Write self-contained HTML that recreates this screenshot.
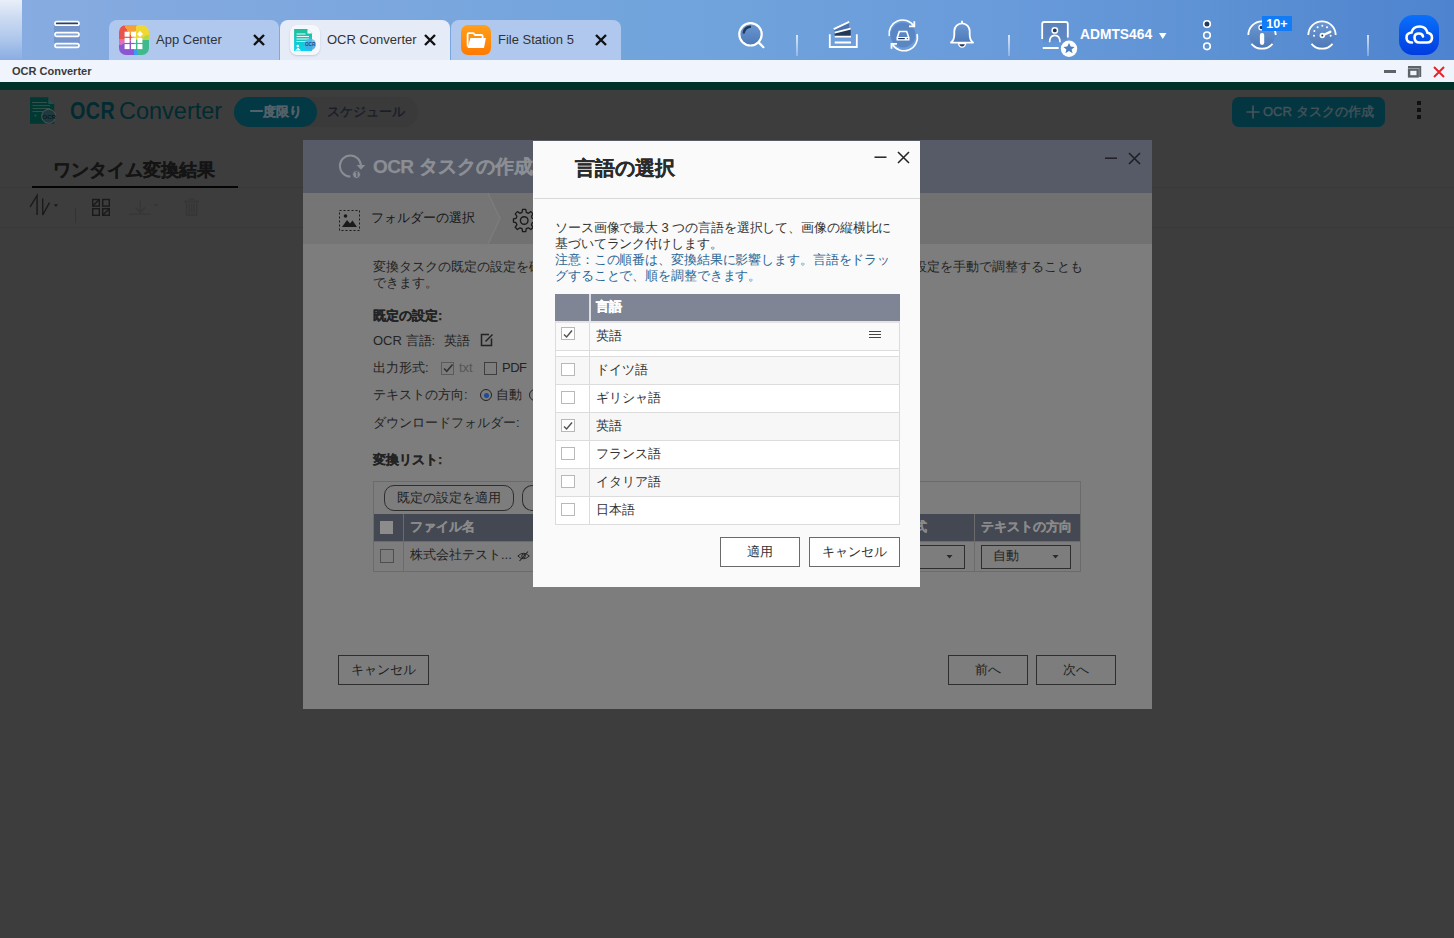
<!DOCTYPE html>
<html><head><meta charset="utf-8">
<style>
*{box-sizing:border-box;margin:0;padding:0}
html,body{width:1454px;height:938px;overflow:hidden;font-family:"Liberation Sans",sans-serif;background:#3d3d3d;color:#222}
.a{position:absolute}
svg{position:absolute;overflow:visible}
#top{left:0;top:0;width:1454px;height:60px;background:linear-gradient(90deg,#87ace2 0%,#84aae0 7%,#72a4dc 44%,#699bdb 69%,#5d92d4 83%,#4e83cf 100%)}
#strip{left:0;top:0;width:22px;height:60px;background:linear-gradient(180deg,#e9effa 0%,#d0ddf2 25%,#b3caed 60%,#8aade2 100%)}
.tab{top:20px;height:40px;width:170px;border-radius:8px 8px 0 0;background:#b0c8ed}
.tab.act{background:#e5ecf8}
.tab .ic{position:absolute;left:10px;top:5px;width:30px;height:30px;border-radius:7px;overflow:hidden}
.tab .tx{position:absolute;left:47px;top:12px;font-size:13px;color:#333;white-space:nowrap;line-height:16px}
.sep{top:35px;width:2px;height:21px;background:linear-gradient(180deg,rgba(255,255,255,.75),rgba(255,255,255,.25))}
#title{left:0;top:60px;width:1454px;height:22px;background:#eff4fd}
#title .t{position:absolute;left:12px;top:5px;font-size:11px;line-height:12px;color:#3a3a3a;font-weight:bold}
#teal{left:0;top:82px;width:1454px;height:8px;background:#01302b}

.app{font-family:"Liberation Sans",sans-serif}
.hl{left:0;width:1454px;height:1px;background:#383838}
#dlg{left:303px;top:140px;width:849px;height:569px;background:#7d7d7d}
#dhead{left:0;top:0;width:849px;height:53px;background:#575b67}
#steps{left:0;top:53px;width:849px;height:51px;background:#717171}
.bt{font-size:13px;color:#232323;line-height:16px;white-space:nowrap}
.btn{border:1px solid #2e2e2e;background:transparent;font-size:13px;color:#222;text-align:center;line-height:28px;white-space:nowrap}
#lang{left:534px;top:141px;width:386px;height:446px;background:#fafafa}
.lrow{left:21px;width:345px;height:28px;border:1px solid #dcdcdc;border-top:none}
.lrow .c{position:absolute;left:5px;top:6px;width:14px;height:13px;border:1px solid #b8b8b8;background:#fff}
.lrow .d{position:absolute;left:33px;top:0;width:1px;height:100%;background:#dcdcdc}
.lrow .t{position:absolute;left:40px;top:5px;font-size:13px;line-height:15px;color:#333;white-space:nowrap}
.lbtn{top:396px;height:30px;border:1px solid #6a6a6a;background:#fff;font-size:13px;color:#333;text-align:center;line-height:28px}
.bd{-webkit-text-stroke:.25px currentColor}
</style></head>
<body>
<div class="a" id="top"></div>
<div class="a" id="strip"></div>
<!-- hamburger -->
<svg style="left:0;top:0" width="1454" height="60">
  <rect x="54" y="25" width="26" height="19" fill="#7092c8" opacity=".85"/>
  <rect x="55" y="21.6" width="24" height="3.6" rx="1.8" fill="#2a4066" stroke="#fff" stroke-width="1.7"/>
  <rect x="55" y="32.7" width="24" height="3.6" rx="1.8" fill="#84a6da" stroke="#fff" stroke-width="1.7"/>
  <rect x="55" y="43.7" width="24" height="3.6" rx="1.8" fill="#84a6da" stroke="#fff" stroke-width="1.7"/>
</svg>
<div class="a tab" style="left:109px">
  <div class="ic" style="background:conic-gradient(from -35deg at 50% 50%,#f5a03a 0deg 45deg,#f0d834 45deg 105deg,#b5d845 105deg 125deg,#3fb98d 125deg 200deg,#3a9cf2 200deg 215deg,#8e55d2 215deg 285deg,#e46bb6 285deg 310deg,#e8534c 310deg 360deg)">
    <svg style="left:0;top:0" width="30" height="30">
      <g fill="#fff"><rect x="5.6" y="6.7" width="5" height="5"/><rect x="12" y="6.7" width="5" height="5"/><path d="M21 5.9L24 8.9L21 11.9L18 8.9Z"/>
      <rect x="5.6" y="12.9" width="5" height="5"/><rect x="12" y="12.9" width="5" height="5"/><rect x="18.4" y="12.9" width="5" height="5"/>
      <rect x="5.6" y="19.1" width="5" height="5"/><rect x="12" y="19.1" width="5" height="5"/><rect x="18.4" y="19.1" width="5" height="5"/></g>
    </svg>
  </div>
  <div class="tx">App Center</div>
  <svg style="left:144px;top:14px" width="12" height="12"><path d="M1 1L11 11M11 1L1 11" stroke="#111" stroke-width="2.4"/></svg>
</div>
<div class="a tab act" style="left:280px">
  <div class="ic" style="background:#f4f7fb;box-shadow:0 1px 2px rgba(0,0,0,.15)">
    <svg style="left:0;top:0" width="30" height="30">
      <defs><linearGradient id="dg" x1="0" y1="0" x2="0" y2="1"><stop offset="0" stop-color="#20bf98"/><stop offset="1" stop-color="#04d4f4"/></linearGradient></defs>
      <path d="M4.1 4H17.5L22 8.5V26H4.1Z" fill="url(#dg)"/>
      <path d="M17.5 4L22 8.5H17.5Z" fill="#fff"/>
      <g stroke="#fff" stroke-width="1.1" opacity=".9"><path d="M6.5 9H15.5M6.5 11.5H19M6.5 14H19M6.5 16.5H17"/></g>
      <circle cx="7.8" cy="21" r="1.3" fill="#fff"/>
      <path d="M5 25.5L8 22.5L11 25.5Z" fill="#fff"/>
      <circle cx="20" cy="19.5" r="6" fill="#5ab8f0" opacity=".8"/>
      <path d="M14.5 19.5A5.5 5.5 0 0 0 25.5 19.5" fill="#3a9ee0" opacity=".5"/>
      <text x="15" y="21.2" font-size="4.6" font-weight="bold" fill="#174a7a" font-family="Liberation Sans">OCR</text>
    </svg>
  </div>
  <div class="tx">OCR Converter</div>
  <svg style="left:144px;top:14px" width="12" height="12"><path d="M1 1L11 11M11 1L1 11" stroke="#111" stroke-width="2.4"/></svg>
</div>
<div class="a tab" style="left:451px">
  <div class="ic" style="background:linear-gradient(180deg,#ff9f1c,#ff7a00)">
    <svg style="left:0;top:0" width="30" height="30">
      <path d="M6.6 21.5V9.2Q6.6 8.1 7.7 8.1H12.5L14 10H20.5Q21.6 10 21.6 11.1V13" fill="none" stroke="#fff" stroke-width="1.8" stroke-linejoin="round"/>
      <path d="M9.4 13.1H24.9L23.1 22.4Q22.9 23.1 22.2 23.1H7.4Q6.4 23.1 6.7 22Z" fill="#fff"/>
    </svg>
  </div>
  <div class="tx">File Station 5</div>
  <svg style="left:144px;top:14px" width="12" height="12"><path d="M1 1L11 11M11 1L1 11" stroke="#111" stroke-width="2.4"/></svg>
</div>

<!-- right icons -->
<svg style="left:0;top:0" width="1454" height="60">
  <defs><linearGradient id="ig" x1="0" y1="0" x2="0" y2="1"><stop offset="0" stop-color="#6b98d3"/><stop offset="1" stop-color="#4d7ab6"/></linearGradient></defs>
  <!-- search -->
  <circle cx="750.5" cy="34.3" r="11.2" fill="url(#ig)" stroke="#fff" stroke-width="2.2"/>
  <path d="M743.8 32.5Q744.8 27.6 750 26.8" stroke="#22385a" stroke-width="2.4" fill="none" stroke-linecap="round"/>
  <path d="M758.6 42.4L763.4 47.2" stroke="#fff" stroke-width="2.2" stroke-linecap="round"/>
  <!-- stack -->
  <path d="M829.8 34.3V47H856.8V34.3" stroke="#fff" stroke-width="1.8" fill="none"/>
  <path d="M833.7 29.1L849.2 21.9V28.6L834.7 32.7Z" fill="#4b72ad"/>
  <path d="M834.7 32.7L850.7 28.6V36.3H834.7Z" fill="#22385a"/>
  <path d="M833.7 29.1L849.2 21.9M834.7 32.7L850.7 28.6M834.7 36.6H851M834.7 42.5H851" stroke="#fff" stroke-width="1.8"/>
  <!-- sync -->
  <circle cx="903" cy="35" r="12.5" fill="#5a87c4"/>
  <path d="M889.3 36A13.5 13.5 0 0 1 913.8 26" stroke="#fff" stroke-width="1.6" fill="none"/>
  <path d="M917 34A13.5 13.5 0 0 1 892.5 44.5" stroke="#fff" stroke-width="1.6" fill="none"/>
  <path d="M914.3 21.3V26.3H909" stroke="#fff" stroke-width="1.8" fill="none"/>
  <path d="M891.5 48.8V43.8H897" stroke="#fff" stroke-width="1.8" fill="none"/>
  <path d="M897.3 37.5L899.3 31.5H906.7L908.7 37.5" fill="none" stroke="#fff" stroke-width="1.6"/>
  <path d="M896.5 37H909.5V40.5H896.5Z" fill="#fff"/>
  <path d="M898.2 38.6H904.8" stroke="#22385a" stroke-width="1.2"/><circle cx="907.3" cy="38.6" r=".6" fill="#22385a"/>
  <!-- bell -->
  <path d="M962 20.8V23" stroke="#fff" stroke-width="1.8"/>
  <path d="M951 42.6Q954.3 40.2 954.3 34.5V31A7.7 7.7 0 0 1 969.7 31V34.5Q969.7 40.2 973 42.6Z" fill="url(#ig)" stroke="#fff" stroke-width="1.8" stroke-linejoin="round"/>
  <path d="M958.6 43.6A3.5 3.5 0 0 0 965.6 43.6Z" fill="#22385a" stroke="#fff" stroke-width="1.4"/>
  <!-- user -->
  <defs><linearGradient id="ug" x1="0" y1="0" x2="0" y2="1"><stop offset="0" stop-color="#5a83be"/><stop offset=".7" stop-color="#5e88c3"/><stop offset="1" stop-color="#6394d6" stop-opacity="0"/></linearGradient></defs><rect x="1043" y="22.5" width="24" height="23" fill="url(#ug)"/>
  <path d="M1042.2 39V24Q1042.2 22 1044.2 22H1065.8Q1067.8 22 1067.8 24V37.5" stroke="#fff" stroke-width="1.8" fill="none"/>
  <path d="M1043.5 48H1058" stroke="#fff" stroke-width="1.8" stroke-linecap="round"/>
  <circle cx="1054.8" cy="30.4" r="2.7" fill="#22385a" stroke="#fff" stroke-width="1.5"/>
  <path d="M1049.6 42.3Q1049.6 35.4 1054.8 35.4Q1060 35.4 1060 42.3" stroke="#fff" stroke-width="1.6" fill="none"/>
  <circle cx="1069" cy="48.7" r="8.2" fill="#fff"/>
  <path d="M1069 43L1070.7 46.6L1074.6 46.9L1071.6 49.4L1072.6 53.2L1069 51.1L1065.4 53.2L1066.4 49.4L1063.4 46.9L1067.3 46.6Z" fill="#5080c4"/>
  <!-- dots -->
  <circle cx="1207" cy="24" r="3.3" fill="#243a5a" stroke="#fff" stroke-width="1.6"/>
  <circle cx="1207" cy="35.3" r="3.3" fill="none" stroke="#fff" stroke-width="1.6"/>
  <circle cx="1207" cy="46.3" r="3.3" fill="none" stroke="#fff" stroke-width="1.6"/>
  <!-- info -->
  <circle cx="1262" cy="35" r="13" fill="url(#ig)"/>
  <path d="M1248.3 35A13.7 13.7 0 0 1 1275.7 35M1272.5 43.8A13.7 13.7 0 0 1 1251.5 43.8" stroke="#fff" stroke-width="1.8" fill="none"/>
  <rect x="1259.9" y="32.9" width="4.3" height="12" rx="2.1" fill="#fff"/>
  <circle cx="1261.3" cy="27.5" r="2.4" fill="#22385a" stroke="#fff" stroke-width="1.3"/>
  <rect x="1262" y="16" width="30" height="15" fill="#127cf6"/>
  <text x="1266.3" y="27.6" font-size="12.5" font-weight="bold" fill="#fff" font-family="Liberation Sans">10+</text>
  <!-- gauge -->
  <circle cx="1322" cy="35" r="13" fill="url(#ig)"/>
  <path d="M1308.3 35A13.7 13.7 0 0 1 1335.7 35M1332.5 43.8A13.7 13.7 0 0 1 1311.5 43.8" stroke="#fff" stroke-width="1.8" fill="none"/>
  <g fill="#fff"><circle cx="1314.4" cy="31.1" r="1"/><circle cx="1317.6" cy="27.2" r="1"/><circle cx="1322.3" cy="25.7" r="1"/><circle cx="1327" cy="27.2" r="1"/><circle cx="1314" cy="35.8" r="1"/><circle cx="1330.6" cy="35.8" r="1"/></g>
  <path d="M1322.3 35.5L1330.3 31.8" stroke="#fff" stroke-width="2.4" stroke-linecap="round"/>
  <circle cx="1322.3" cy="35.5" r="2.7" fill="#fff"/>
  <circle cx="1322.3" cy="35.5" r="1" fill="#22385a"/>
</svg>
<div class="a sep" style="left:796px"></div>
<div class="a sep" style="left:1008px"></div>
<div class="a sep" style="left:1367px"></div>
<div class="a" style="left:1080px;top:28px;font-size:13.8px;font-weight:bold;color:#fff;line-height:14px">ADMTS464</div>
<svg style="left:1159px;top:33px" width="8" height="6"><path d="M0 0H7.5L3.75 6Z" fill="#fff"/></svg>
<div class="a" style="left:1399px;top:15px;width:40px;height:40px;border-radius:14px;background:linear-gradient(180deg,#0a70fc,#003ce0)">
  <svg style="left:0;top:0" width="40" height="40">
    <path d="M13 27.5Q7.5 27.5 7.5 22.5Q7.5 18 12.5 17.5Q14 11.5 20.5 11.5Q27 11.5 28.5 17.8Q33 18.5 33 22.8Q33 27.5 28 27.5H20.5Q15.5 27.5 15.5 22.5Q15.5 18.5 20 18.5Q23.5 18.5 24 21.5" stroke="#fff" stroke-width="2.6" fill="none" stroke-linecap="round"/>
  </svg>
</div>

<div class="a" id="title"><span class="t">OCR Converter</span>
  <div class="a" style="left:1384px;top:10px;width:12px;height:3px;background:#5f6368"></div>
  <svg style="left:1407px;top:5px" width="16" height="14"><path d="M1 2H13.2V12" fill="none" stroke="#5f6368" stroke-width="2"/><rect x="2.1" y="4.6" width="8.6" height="6.8" fill="none" stroke="#5f6368" stroke-width="2.4"/></svg>
  <svg style="left:1433px;top:6px" width="12" height="12"><path d="M1 1L11 11M11 1L1 11" stroke="#e8232a" stroke-width="2"/></svg>
</div>
<div class="a" id="teal"></div>

<!-- app header (dimmed) -->
<svg style="left:29px;top:97px" width="30" height="30">
  <path d="M1 0.3H19.3L25.2 7V26.8H1Z" fill="#023832"/>
  <path d="M19.3 0.3L25.2 7H19.3Z" fill="#2c4a48"/>
  <g stroke="#33504c" stroke-width="1"><path d="M3 5.5H18M3.5 8.6H21M3.5 11.5H21M3.5 14.5H21"/></g>
  <circle cx="6.5" cy="18.5" r="1" fill="#3a4f4c"/>
  <circle cx="19.7" cy="19.3" r="7" fill="#1f3a3e" stroke="#555" stroke-width="1"/>
  <text x="13.6" y="21.5" font-size="6" font-weight="bold" fill="#0b1a22" font-family="Liberation Sans">OCR</text>
</svg>
<div class="a" style="left:70px;top:97px;font-size:23.5px;line-height:28px;color:#022b31;white-space:nowrap"><b style="display:inline-block;transform:scaleX(.84);transform-origin:0 0;letter-spacing:.6px">OCR</b><span style="position:absolute;left:49px;top:0;letter-spacing:0">Converter</span></div>
<div class="a" style="left:234px;top:97px;width:184px;height:30px;border-radius:15px;background:#3a3a3a"></div>
<div class="a" style="left:234px;top:97px;width:83px;height:30px;border-radius:15px;background:#023944;color:#53616a;font-size:13px;font-weight:bold;line-height:30px;text-align:center;-webkit-text-stroke:.3px #53616a">一度限り</div>
<div class="a" style="left:327px;top:97px;font-size:12.5px;line-height:30px;color:#181c28;-webkit-text-stroke:.35px #181c28">スケジュール</div>
<div class="a" style="left:1232px;top:97px;width:153px;height:30px;border-radius:7px;background:#033640;color:#45535a;font-size:13px;line-height:30px;white-space:nowrap"><svg style="left:14px;top:8px" width="14" height="14"><path d="M7 0.5V13.5M0.5 7H13.5" stroke="#45535a" stroke-width="1.7"/></svg><span class="bd" style="position:absolute;left:31px;-webkit-text-stroke:.4px currentColor">OCR タスクの作成</span></div>
<div class="a" style="left:1417px;top:101px;width:4px;height:4px;background:#111"></div>
<div class="a" style="left:1417px;top:108px;width:4px;height:4px;background:#111"></div>
<div class="a" style="left:1417px;top:115px;width:4px;height:4px;background:#111"></div>
<div class="a bd" style="left:53px;top:159.5px;font-size:17.5px;font-weight:bold;color:#141414;line-height:20px;white-space:nowrap">ワンタイム変換結果</div>
<div class="a hl" style="top:187px"></div>
<div class="a" style="left:32px;top:186px;width:206px;height:2px;background:#050505"></div>
<div class="a hl" style="top:227px"></div>
<svg style="left:0;top:190px" width="300" height="40">
  <path d="M30.1 16.8L37.1 5.5V25M42.7 8.5V25L49.5 12.7" stroke="#1a1a1a" stroke-width="1.4" fill="none"/>
  <path d="M53.8 14.2H58L55.9 17Z" fill="#1a1a1a"/>
  <path d="M75.5 17.8V33.3" stroke="#333" stroke-width="1"/>
  <g stroke="#1a1a1a" stroke-width="1.4" fill="none"><rect x="92.7" y="9.5" width="6.6" height="6.6"/><rect x="102.7" y="9.5" width="6.6" height="6.6"/><rect x="92.7" y="18.7" width="6.6" height="6.6"/><rect x="102.7" y="18.7" width="6.6" height="6.6"/><path d="M92.7 16.1L99.3 9.5M102.7 25.3L109.3 18.7"/></g>
  <g stroke="#363636" stroke-width="1.3" fill="none"><path d="M129 24.2H150.6M140.3 10.6V22.5M135.5 17.5L140.3 22.5L145.1 17.5"/></g>
  <path d="M153.5 14H159L156.2 17Z" fill="#363636"/>
  <g stroke="#363636" stroke-width="1.3" fill="none"><path d="M184.2 11.5H199M186.5 11.5V25H196.7V11.5M189.3 13.5V23.5M191.6 13.5V23.5M193.9 13.5V23.5M188.8 9.2H194.4"/></g>
</svg>

<!-- task dialog -->
<div class="a" id="dlg">
  <div class="a" id="dhead">
    <svg style="left:36px;top:14px" width="30" height="26">
      <path d="M11.4 22.5A10.5 10.5 0 1 1 21.9 12" stroke="#8a8d91" stroke-width="2" fill="none"/>
      <path d="M17.6 11.1H26.3L22 15.8Z" fill="#8a8d91"/>
      <circle cx="17.5" cy="20.5" r="4" fill="#8a8d91" stroke="#575b67" stroke-width="1"/>
      <path d="M16.6 18.8L17.9 18V23" stroke="#575b67" stroke-width="1.3" fill="none"/>
    </svg>
    <div class="a bd" style="left:70px;top:16px;font-size:19px;font-weight:bold;color:#8b8e93;line-height:22px;white-space:nowrap"><span style="letter-spacing:-.6px">OCR</span> タスクの作成</div>
    <svg style="left:802px;top:17px" width="13" height="3"><path d="M0 1.2H12" stroke="#1f1f24" stroke-width="1.5"/></svg>
    <svg style="left:825px;top:12px" width="13" height="13"><path d="M1 1L12 12M12 1L1 12" stroke="#1f1f24" stroke-width="1.6"/></svg>
  </div>
  <div class="a" id="steps">
    <svg style="left:0;top:0" width="849" height="51"><path d="M0 0H185L197 25.5L185 51H0Z" fill="#757575"/><path d="M185 0L197 25.5L185 51" fill="none" stroke="#7c7c7c" stroke-width="1.5"/></svg>
    <svg style="left:36px;top:17px" width="22" height="22">
      <rect x="0.5" y="0.5" width="20" height="20" fill="none" stroke="#1a1a1a" stroke-width="1" stroke-dasharray="2 2"/>
      <circle cx="6.5" cy="6" r="1.8" fill="#1a1a1a"/>
      <path d="M3 17L8 10L11 13.5L13.5 10.5L18 17Z" fill="#1a1a1a"/>
    </svg>
    <div class="a bt" style="left:68px;top:17px;color:#141414">フォルダーの選択</div>
    <svg style="left:210px;top:16px" width="24" height="24">
      <path d="M10.3 1.5H13.7L14.3 4.6L16.6 5.6L19.2 3.8L21.6 6.2L19.8 8.8L20.8 11.1L23.5 11.7V15.1L20.8 15.7L19.8 18L21.6 20.6L19.2 23L16.6 21.2L14.3 22.2L13.7 25.3H10.3L9.7 22.2L7.4 21.2L4.8 23L2.4 20.6L4.2 18L3.2 15.7L0.5 15.1V11.7L3.2 11.1L4.2 8.8L2.4 6.2L4.8 3.8L7.4 5.6L9.7 4.6Z" transform="scale(.93) translate(0,-1)" fill="none" stroke="#1a1a1a" stroke-width="1.4" stroke-linejoin="round"/>
      <circle cx="11.2" cy="11.5" r="3.8" fill="none" stroke="#1a1a1a" stroke-width="1.4"/>
    </svg>
  </div>
  <div class="a bt" style="left:70px;top:119px">変換タスクの既定の設定を確認</div><div class="a bt" style="left:611px;top:119px">設定を手動で調整することも</div>
  <div class="a bt" style="left:70px;top:135px">できます。</div>
  <div class="a bt bd" style="left:70px;top:168px;font-weight:bold">既定の設定:</div>
  <div class="a bt" style="left:70px;top:193px">OCR 言語:</div>
  <div class="a bt" style="left:141px;top:193px">英語</div>
  <svg style="left:177px;top:193px" width="14" height="14"><path d="M9 1.5H1.5V12.5H11.5V5.5" stroke="#222" stroke-width="1.5" fill="none"/><path d="M5.5 8.5L12.5 1.5" stroke="#222" stroke-width="1.5"/></svg>
  <div class="a bt" style="left:70px;top:220px">出力形式:</div>
  <div class="a" style="left:138px;top:222px;width:13px;height:13px;border:1px solid #5a5a5a"></div>
  <svg style="left:139px;top:222px" width="12" height="12"><path d="M2 6.5L4.8 9.3L10.5 2.5" stroke="#333" stroke-width="1.6" fill="none"/></svg>
  <div class="a bt" style="left:156px;top:220px;color:#555">txt</div>
  <div class="a" style="left:181px;top:222px;width:13px;height:13px;border:1px solid #3e3e3e"></div>
  <div class="a bt" style="left:199px;top:220px;letter-spacing:-.5px">PDF</div>
  <div class="a bt" style="left:70px;top:247px">テキストの方向:</div>
  <div class="a" style="left:177px;top:249px;width:12px;height:12px;border-radius:50%;border:1px solid #222"></div>
  <div class="a" style="left:180.5px;top:252.5px;width:5px;height:5px;border-radius:50%;background:#1f4a98"></div>
  <div class="a bt" style="left:193px;top:247px">自動</div><div class="a" style="left:226px;top:249px;width:12px;height:12px;border-radius:50%;border:1px solid #222"></div>
  <div class="a bt" style="left:70px;top:275px">ダウンロードフォルダー:</div>
  <div class="a bt bd" style="left:70px;top:312px;font-weight:bold">変換リスト:</div>
  <!-- table -->
  <div class="a" style="left:70px;top:341px;width:708px;height:91px;border:1px solid #6b6b6b"></div>
  <div class="a" style="left:81px;top:345px;width:130px;height:26px;border:1px solid #2e2e2e;border-radius:10px;font-size:13px;line-height:24px;text-align:center;color:#222">既定の設定を適用</div>
  <div class="a" style="left:219px;top:345px;width:40px;height:26px;border:1px solid #2e2e2e;border-radius:10px 0 0 10px;border-right:none"></div>
  <div class="a" style="left:71px;top:374px;width:706px;height:27px;background:#444852"></div>
  <div class="a" style="left:100px;top:374px;width:1px;height:58px;background:#6b6b6b"></div>
  <div class="a" style="left:671px;top:374px;width:1px;height:58px;background:#6b6b6b"></div>
  <div class="a" style="left:77px;top:381px;width:13px;height:13px;background:#8c8c8c"></div>
  <div class="a bt bd" style="left:107px;top:379px;font-weight:bold;color:#8a8a8a">ファイル名</div>
  <div class="a bt bd" style="left:678px;top:379px;font-weight:bold;color:#8a8a8a">テキストの方向</div><div class="a bt bd" style="left:572px;top:379px;font-weight:bold;color:#8a8a8a">出力形式</div>
  <div class="a" style="left:71px;top:401px;width:706px;height:1px;background:#6b6b6b"></div>
  <div class="a" style="left:77px;top:409px;width:14px;height:14px;border:1px solid #4e4e4e"></div>
  <div class="a bt" style="left:107px;top:407px">株式会社テスト...</div>
  <svg style="left:214px;top:411px" width="14" height="11"><path d="M0.8 5Q6.5 -0.5 12.3 5Q6.5 10.5 0.8 5Z" stroke="#262626" stroke-width="1" fill="none"/><circle cx="6.5" cy="5" r="1.8" fill="none" stroke="#262626" stroke-width="1"/><path d="M2.5 10L11 0.5" stroke="#262626" stroke-width="1.1"/></svg>
  <div class="a" style="left:560px;top:405px;width:102px;height:24px;border:1px solid #2e2e2e"></div>
  <svg style="left:643px;top:415px" width="8" height="5"><path d="M0.5 0H6.5L3.5 3.6Z" fill="#2a2a2a"/></svg>
  <div class="a" style="left:678px;top:405px;width:90px;height:24px;border:1px solid #2e2e2e"></div>
  <div class="a bt" style="left:690px;top:408px">自動</div>
  <svg style="left:749px;top:415px" width="8" height="5"><path d="M0.5 0H6.5L3.5 3.6Z" fill="#2a2a2a"/></svg>
  <div class="a btn" style="left:35px;top:515px;width:91px;height:30px">キャンセル</div>
  <div class="a btn" style="left:645px;top:515px;width:80px;height:30px">前へ</div>
  <div class="a btn" style="left:733px;top:515px;width:80px;height:30px">次へ</div>
</div>

<!-- language dialog -->
<div class="a" style="left:533px;top:141px;width:2px;height:446px;background:#fafafa"></div>
<div class="a" id="lang">
  <div class="a bd" style="left:41px;top:15px;font-size:20px;font-weight:bold;color:#2b2b2b;line-height:24px;white-space:nowrap">言語の選択</div>
  <svg style="left:340px;top:15px" width="13" height="3"><path d="M0.5 1.2H12.5" stroke="#222" stroke-width="1.5"/></svg>
  <svg style="left:363px;top:10px" width="13" height="13"><path d="M1 1L12 12M12 1L1 12" stroke="#222" stroke-width="1.5"/></svg>
  <div class="a" style="left:0;top:57px;width:386px;height:1px;background:#d8d8d8"></div>
  <div class="a" style="left:21px;top:78.8px;font-size:13px;line-height:16.15px;color:#333;width:360px;letter-spacing:-.11px">ソース画像で最大 3 つの言語を選択して、画像の縦横比に<br>基づいてランク付けします。<br><span style="color:#2a6796">注意：この順番は、変換結果に影響します。言語をドラッ<br>グすることで、順を調整できます。</span></div>
  <div class="a" style="left:21px;top:153px;width:345px;height:27px;background:#7f8595"></div>
  <div class="a" style="left:55px;top:153px;width:1.5px;height:27px;background:#dcdee4"></div>
  <div class="a" style="-webkit-text-stroke:.5px #fff;left:62px;top:158px;font-size:13px;font-weight:bold;color:#fff;line-height:16px">言語</div>
  <div class="a lrow" style="top:180px;height:30px;background:#fafafa;border-top:2px solid #e4e4e4"><div class="c" style="top:4px"><svg style="left:0;top:0" width="12" height="12"><path d="M2 6.5L4.6 9L10 2.5" stroke="#555" stroke-width="1.5" fill="none"/></svg></div><div class="d"></div><div class="t" style="top:5px">英語</div>
    <svg style="left:313px;top:8px" width="13" height="8"><path d="M0 .5H12M0 3.5H12M0 6.5H12" stroke="#444" stroke-width="1.2"/></svg></div>
  <div class="a lrow" style="top:210px;height:6px;background:#fff"><div class="d"></div></div>
  <div class="a lrow" style="top:215px;border-top:1px solid #dcdcdc;height:29px;background:#f7f7f7"><div class="c"></div><div class="d"></div><div class="t">ドイツ語</div></div>
  <div class="a lrow" style="top:244px;background:#fff"><div class="c"></div><div class="d"></div><div class="t">ギリシャ語</div></div>
  <div class="a lrow" style="top:272px;background:#f7f7f7"><div class="c"><svg style="left:0;top:0" width="12" height="12"><path d="M2 6.5L4.6 9L10 2.5" stroke="#555" stroke-width="1.5" fill="none"/></svg></div><div class="d"></div><div class="t">英語</div></div>
  <div class="a lrow" style="top:300px;background:#fff"><div class="c"></div><div class="d"></div><div class="t">フランス語</div></div>
  <div class="a lrow" style="top:328px;background:#f7f7f7"><div class="c"></div><div class="d"></div><div class="t">イタリア語</div></div>
  <div class="a lrow" style="top:356px;background:#fff"><div class="c"></div><div class="d"></div><div class="t">日本語</div></div>
  <div class="a lbtn" style="left:186px;width:80px">適用</div>
  <div class="a lbtn" style="left:275px;width:91px">キャンセル</div>
</div>
</body></html>
